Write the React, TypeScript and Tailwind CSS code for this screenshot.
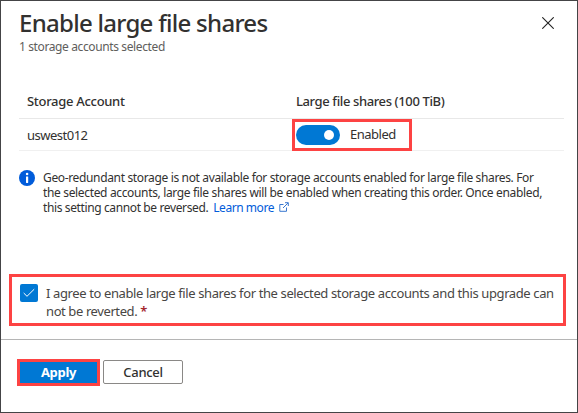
import React from "react";

function InfoIcon() {
  return (
    <svg width="16" height="16" viewBox="0 0 16 16" className="block shrink-0">
      <circle cx="8" cy="8" r="8" fill="#015cda" />
      <rect x="7" y="6.4" width="2.2" height="6.6" rx="0.4" fill="#fff" />
      <circle cx="8.1" cy="4" r="1.3" fill="#fff" />
    </svg>
  );
}

function ExternalIcon() {
  return (
    <svg width="10" height="10" viewBox="0 0 10 10" fill="none" stroke="#3a78d0" className="ml-[5px] block -translate-y-px">
      <path d="M4.5 2.5H0.8V9.3H7.5V5.5M6 0.7H9.3V4M9.1 0.9L4 6" />
    </svg>
  );
}

export default function App() {
  return (
    <div className="flex h-[413px] w-[578px] flex-col overflow-hidden border border-[#444446] bg-white font-['Noto_Sans','Open_Sans',sans-serif] text-[13px] whitespace-nowrap text-[#323130]">
      <header className="flex h-[88px] justify-between pr-[23px] pl-[18px]">
        <div className="pt-[6px]">
          <h1 className="h-[32px] text-[24px] leading-[32px] font-medium tracking-[-0.72px]">Enable large file shares</h1>
          <p className="text-[12px] leading-[16px] tracking-[-0.38px] text-[#605e5c]">1 storage accounts selected</p>
        </div>
        <svg width="12" height="12" viewBox="0 0 12 12" stroke="#222" strokeWidth="1.1" className="mt-[16px]">
          <path d="M0.3 0.3L11.7 11.7M11.7 0.3L0.3 11.7" />
        </svg>
      </header>

      <section className="ml-[18px] w-[545px]">
        <div className="grid h-[30px] grid-cols-[269px_1fr] border-b border-[#e8e8e8] pl-2 leading-[24px] font-medium">
          <span className="tracking-[-0.3px]">Storage Account</span>
          <span className="tracking-[-0.38px]">Large file shares (100 TiB)</span>
        </div>
        <div className="grid h-[32px] grid-cols-[265px_1fr] border-b border-[#f0f0f0] pl-2">
          <span className="leading-[33px] tracking-[-0.5px]">uswest012</span>
          <div className="-mb-px flex h-[32px] w-[120px] items-center border-3 border-[#fd4343] pl-px">
            <span className="flex h-[20px] w-[44px] items-center justify-end rounded-full bg-[#0078d4] pr-[6px]">
              <span className="size-[10px] rounded-full bg-white" />
            </span>
            <span className="ml-[10px] tracking-[-0.5px]">Enabled</span>
          </div>
        </div>
      </section>

      <section className="mt-[18px] flex h-[105px] pl-[18px]">
        <div className="pt-px"><InfoIcon /></div>
        <div className="ml-[8px] pt-px text-[12px] leading-[15px]">
          <p className="tracking-[-0.35px]">Geo-redundant storage is not available for storage accounts enabled for large file shares. For</p>
          <p className="tracking-[-0.345px]">the selected accounts, large file shares will be enabled when creating this order. Once enabled,</p>
          <p className="flex items-center tracking-[-0.38px]">
            <span>this setting cannot be reversed.</span>
            <a className="ml-[5px] tracking-[-0.45px] text-[#015cda]">Learn more</a>
            <ExternalIcon />
          </p>
        </div>
      </section>

      <section className="mx-[8px] flex h-[52px] w-[557px] shrink-0 border-3 border-[#fd4343] pt-[7px] pl-[8px] text-[#484644]">
        <span className="flex size-[18px] shrink-0 items-center justify-center rounded-[2px] bg-[#0078d4]">
          <svg width="12" height="12" viewBox="0 0 12 12" fill="none" stroke="#fff">
            <path d="M0.7 6L4 9.3L11.2 2.2" />
          </svg>
        </span>
        <div className="ml-[8px] text-[13px] leading-[18px]">
          <p className="tracking-[-0.385px]">I agree to enable large file shares for the selected storage accounts and this upgrade can</p>
          <p className="tracking-[-0.4px]">not be reverted. <span className="font-semibold text-[#a4262c]">*</span></p>
        </div>
      </section>

      <footer className="mt-[13px] flex border-t border-[#b5b5b5] pt-[19px] pl-[16px]">
        <button className="h-[27px] w-[83px] border-3 border-[#fd4343] bg-[#0078d4] leading-[19px] font-bold tracking-[-0.3px] text-white">Apply</button>
        <button className="mt-px ml-[3px] h-[24px] w-[80px] rounded-[2px] border border-[#8a8886] leading-[20px] font-medium tracking-[-0.3px]">Cancel</button>
      </footer>
    </div>
  );
}
